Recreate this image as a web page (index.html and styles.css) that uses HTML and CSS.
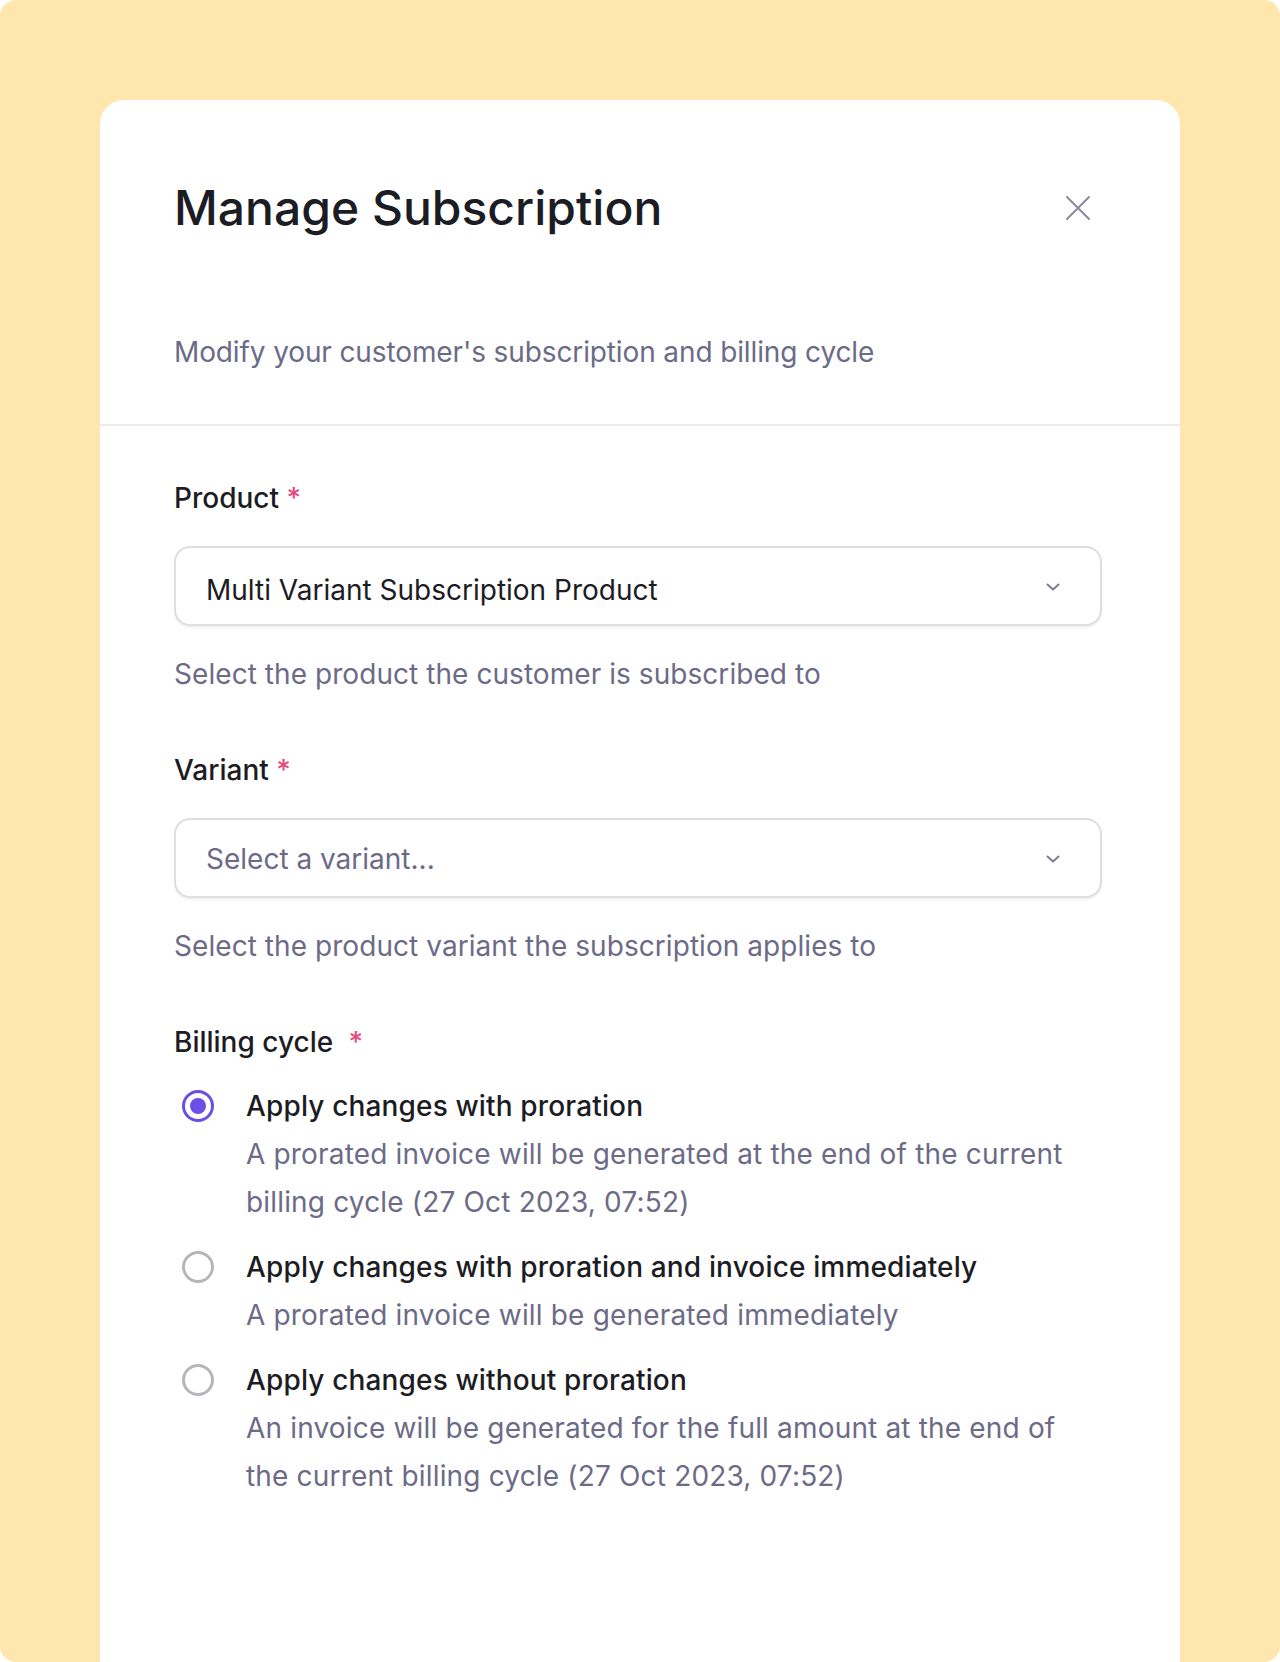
FILE: index.html
```html
<!DOCTYPE html>
<html>
	<head>
		<title>Manage Subscription</title>
		<link rel="stylesheet" href="styles.css">
	</head>
	<body>
		<div class="frame">
			<div class="modal">
				<div class="modal-header">
					<div class="header-top">
						<h1>Manage Subscription</h1>
						<button class="close" aria-label="Close">
							<svg width="24" height="24" viewBox="0 0 24 24" fill="none" stroke="currentColor" stroke-width="2" stroke-linecap="round"><path d="M1 1L23 23M23 1L1 23"/></svg>
						</button>
					</div>
					<p class="subtitle">Modify your customer's subscription and billing cycle</p>
				</div>

				<div class="modal-body">
					<div class="field">
						<label>Product <span class="req">*</span></label>
						<div class="select">
							<span class="value">Multi Variant Subscription Product</span>
							<svg class="chevron" width="14" height="8" viewBox="0 0 14 8" fill="none" stroke="currentColor" stroke-width="2" stroke-linecap="round" stroke-linejoin="round"><path d="M1.5 1.5L7 6.5L12.5 1.5"/></svg>
						</div>
						<p class="help">Select the product the customer is subscribed to</p>
					</div>

					<div class="field">
						<label>Variant <span class="req">*</span></label>
						<div class="select empty">
							<span class="value placeholder">Select a variant...</span>
							<svg class="chevron" width="14" height="8" viewBox="0 0 14 8" fill="none" stroke="currentColor" stroke-width="2" stroke-linecap="round" stroke-linejoin="round"><path d="M1.5 1.5L7 6.5L12.5 1.5"/></svg>
						</div>
						<p class="help">Select the product variant the subscription applies to</p>
					</div>

					<div class="field">
						<label>Billing cycle <span class="req wide">*</span></label>
						<div class="options">
							<div class="option">
								<span class="radio-box"><span class="radio checked"></span></span>
								<div class="option-text">
									<div class="option-title">Apply changes with proration</div>
									<div class="option-desc">A prorated invoice will be generated at the end of the current billing cycle (27 Oct 2023, 07:52)</div>
								</div>
							</div>
							<div class="option">
								<span class="radio-box"><span class="radio"></span></span>
								<div class="option-text">
									<div class="option-title">Apply changes with proration and invoice immediately</div>
									<div class="option-desc">A prorated invoice will be generated immediately</div>
								</div>
							</div>
							<div class="option">
								<span class="radio-box"><span class="radio"></span></span>
								<div class="option-text">
									<div class="option-title">Apply changes without proration</div>
									<div class="option-desc">An invoice will be generated for the full amount at the end of the current billing cycle (27 Oct 2023, 07:52)</div>
								</div>
							</div>
						</div>
					</div>
				</div>
			</div>
		</div>
	</body>
</html>
```

FILE: styles.css
```css
* {
	margin: 0; padding: 0;
	box-sizing: border-box;
}

body {
	background: #fff;
	font-family: "Inter", "Liberation Sans", sans-serif;
	color: #1c1c24;
}

.frame {
	height: 1662px;
	padding: 100px 100px 0;
	background: #fee6ad;
	border-radius: 16px;
	overflow: hidden;
}

.modal {
	height: 100%;
	background: #fff;
	border-radius: 24px 24px 0 0;
}

.modal-header {
	padding: 80px 78px 48px 74px;
	border-bottom: 2px solid #ebebef;
}

.header-top {
	display: flex;
	align-items: center;
	justify-content: space-between;
}

h1 {
	font-size: 48px;
	line-height: 56px;
	font-weight: 500;
	color: #1c1c24;
}

.close {
	width: 48px;
	height: 48px;
	display: flex;
	align-items: center;
	justify-content: center;
	background: none;
	border: none;
	color: #8a89a4;
	cursor: pointer;
}

.subtitle {
	margin-top: 92px;
	font-size: 28px;
	line-height: 48px;
	letter-spacing: -0.12px;
	color: #6c6b87;
}

.modal-body {
	padding: 48px 78px 0 74px;
}

.field + .field {
	margin-top: 48px;
}

label {
	display: block;
	font-size: 28px;
	line-height: 48px;
	font-weight: 500;
	color: #1c1c24;
}

.req {
	color: #e8487b;
}

.req.wide {
	margin-left: 8px;
}

.select {
	margin-top: 24px;
	height: 80px;
	display: flex;
	align-items: center;
	justify-content: space-between;
	padding: 8px 40px 0 30px;
	border: 2px solid #dddde2;
	border-radius: 16px;
	box-shadow: 0 2px 2px rgba(20, 20, 40, 0.05);
}

.select.empty {
	padding-top: 2px;
}

.value {
	font-size: 28px;
	line-height: 48px;
	color: #1c1c24;
}

.value.placeholder {
	color: #6c6b87;
}

.chevron {
	margin-top: -6px;
	color: #7d7c98;
}

.select.empty .chevron {
	margin-top: 0;
}

.help {
	margin-top: 24px;
	font-size: 28px;
	line-height: 48px;
	letter-spacing: 0.06px;
	color: #6c6b87;
}

.options {
	margin-top: 16px;
	display: flex;
	flex-direction: column;
	gap: 17px;
}

.option {
	display: flex;
	gap: 24px;
}

.radio-box {
	flex: none;
	width: 48px;
	height: 48px;
	display: flex;
	align-items: center;
	justify-content: center;
}

.radio {
	width: 32px;
	height: 32px;
	border: 3px solid #b5b5bc;
	border-radius: 50%;
	display: flex;
	align-items: center;
	justify-content: center;
}

.radio.checked {
	border-color: #6a4fe6;
}

.radio.checked::after {
	content: "";
	width: 16px;
	height: 16px;
	border-radius: 50%;
	background: #6a4fe6;
}

.option-text {
	max-width: 830px;
}

.option-title {
	font-size: 28px;
	line-height: 48px;
	font-weight: 500;
	letter-spacing: 0.15px;
	color: #1c1c24;
}

.option-desc {
	font-size: 28px;
	line-height: 48px;
	letter-spacing: 0.17px;
	color: #6c6b87;
}
```
